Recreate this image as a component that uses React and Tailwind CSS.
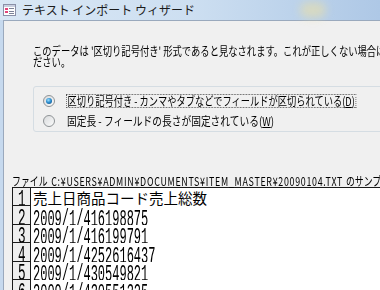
import React from "react";

const jp = { fontFamily: '"Noto Sans CJK JP", "Noto Sans", sans-serif' };
const mono = { fontFamily: '"Liberation Mono", monospace' };

const rows = [
  { n: "1", t: "売上日商品コード売上総数", jp: true, h: "h-[18px]" },
  { n: "2", t: "2009/1/416198875", h: "h-[19px]" },
  { n: "3", t: "2009/1/416199791", h: "h-[18px]" },
  { n: "4", t: "2009/1/4252616437", h: "h-[19px]" },
  { n: "5", t: "2009/1/430549821", h: "h-[18px]" },
  { n: "6", t: "2009/1/430551325", h: "h-[19px]" },
];

function Radio({ checked }) {
  return (
    <span className="relative flex h-[12px] w-[12px] shrink-0 items-center justify-center rounded-full border border-[#8f9396] bg-gradient-to-br from-[#d9dbdd] to-[#fbfbfb]">
      {checked && (
        <span className="h-[6px] w-[6px] rounded-full bg-[radial-gradient(circle_at_40%_35%,#9fe0ff_0%,#2c8fd0_45%,#0d3f74_100%)]" />
      )}
    </span>
  );
}

function Icon() {
  return (
    <svg width="13" height="12" viewBox="0 0 13 12">
      <rect x="0.5" y="0.5" width="12" height="11" fill="#ffffff" stroke="#8a90a8" />
      <rect x="1" y="1" width="11" height="2" fill="#c9cfe0" />
      <rect x="2" y="4" width="3" height="2" fill="#e2457a" />
      <rect x="2" y="7" width="3" height="2" fill="#e2457a" />
      <rect x="6" y="4" width="5" height="1" fill="#7c8298" />
      <rect x="6" y="7" width="5" height="1" fill="#7c8298" />
      <rect x="6" y="9" width="5" height="1" fill="#7c8298" />
    </svg>
  );
}

export default function App() {
  return (
    <div className="relative flex h-[290px] w-[380px] flex-col overflow-hidden bg-[#c6d9ee]">
      {/* title bar */}
      <div className="relative flex h-[20px] shrink-0 items-center gap-[6px] bg-gradient-to-r from-[#d9e7f5] via-[#cddff1] to-[#aec8e6] pl-[3px]">
        <Icon />
        <span className="text-[12px] leading-[12px] text-[#1b1b1b]" style={jp}>
          テキスト インポート ウィザード
        </span>
        <span className="absolute left-[300px] top-[2px] h-[16px] w-[26px] rounded-full bg-[#eadfa8] opacity-60 blur-[4px]" />
      </div>

      {/* client area */}
      <div className="ml-[3px] flex w-[600px] flex-1 flex-col border-l border-t border-[#9aa9bd] bg-[#f0f0f0]">
        <div className="pl-[29px] pt-[24px] text-[12px] leading-[11px] text-black" style={jp}>
          <div className="origin-left scale-x-[0.775] whitespace-nowrap">
            このデータは '区切り記号付き' 形式であると見なされます。これが正しくない場合は、適切な形式を選択してく
          </div>
          <div className="origin-left scale-x-[0.775] whitespace-nowrap">ださい。</div>
        </div>

        <div className="ml-[29px] mt-[19px] w-[500px] rounded-[3px] border border-[#d5dde3] pt-[4px]">
          <div className="flex h-[20px] items-center pl-[9px]">
            <Radio checked />
            <span
              className="ml-[11px] origin-left scale-x-[0.77] whitespace-nowrap border border-dotted border-[#555] px-[1px] text-[12px] leading-[12px] text-black"
              style={jp}
            >
              区切り記号付き - カンマやタブなどでフィールドが区切られている(<span className="underline">D</span>)
            </span>
          </div>
          <div className="flex h-[20px] items-center pl-[9px]">
            <Radio />
            <span
              className="ml-[12px] origin-left scale-x-[0.81] whitespace-nowrap text-[12px] leading-[12px] text-black"
              style={jp}
            >
              固定長 - フィールドの長さが固定されている(<span className="underline">W</span>)
            </span>
          </div>
        </div>

        <div className="mt-[43px] h-[12px] pl-[8px] text-[12px] leading-[12px] text-black" style={jp}>
          <div className="flex origin-left scale-x-[0.74] whitespace-nowrap">
            <span>ファイル</span>
            <span className="ml-[5px] tracking-[0.95px]">C:¥USERS¥ADMIN¥DOCUMENTS¥ITEM_MASTER¥20090104.TXT</span>
            <span className="ml-[4px]">のサンプル データ(F):</span>
          </div>
        </div>

        <div className="ml-[8px] flex flex-1 flex-col border-t border-[#1a1a1a] bg-white">
          {rows.map((r) => (
            <div key={r.n} className={`flex ${r.h} shrink-0`}>
              <div className="flex w-[19px] shrink-0 items-end justify-center overflow-hidden border-b border-l border-r border-[#1a1a1a] bg-[#eeeeee]">
                <span className="inline-block origin-center scale-x-[0.55] text-[23px] leading-[10px] text-black" style={mono}>
                  {r.n}
                </span>
              </div>
              <div className="flex flex-1 items-end overflow-hidden pl-[2px]">
                {r.jp ? (
                  <span className="whitespace-nowrap text-[14.5px] leading-[17px] text-black" style={jp}>
                    {r.t}
                  </span>
                ) : (
                  <span className="inline-block origin-left scale-x-[0.522] whitespace-nowrap text-[23px] leading-[10px] text-black" style={mono}>
                    {r.t}
                  </span>
                )}
              </div>
            </div>
          ))}
        </div>
      </div>
    </div>
  );
}
